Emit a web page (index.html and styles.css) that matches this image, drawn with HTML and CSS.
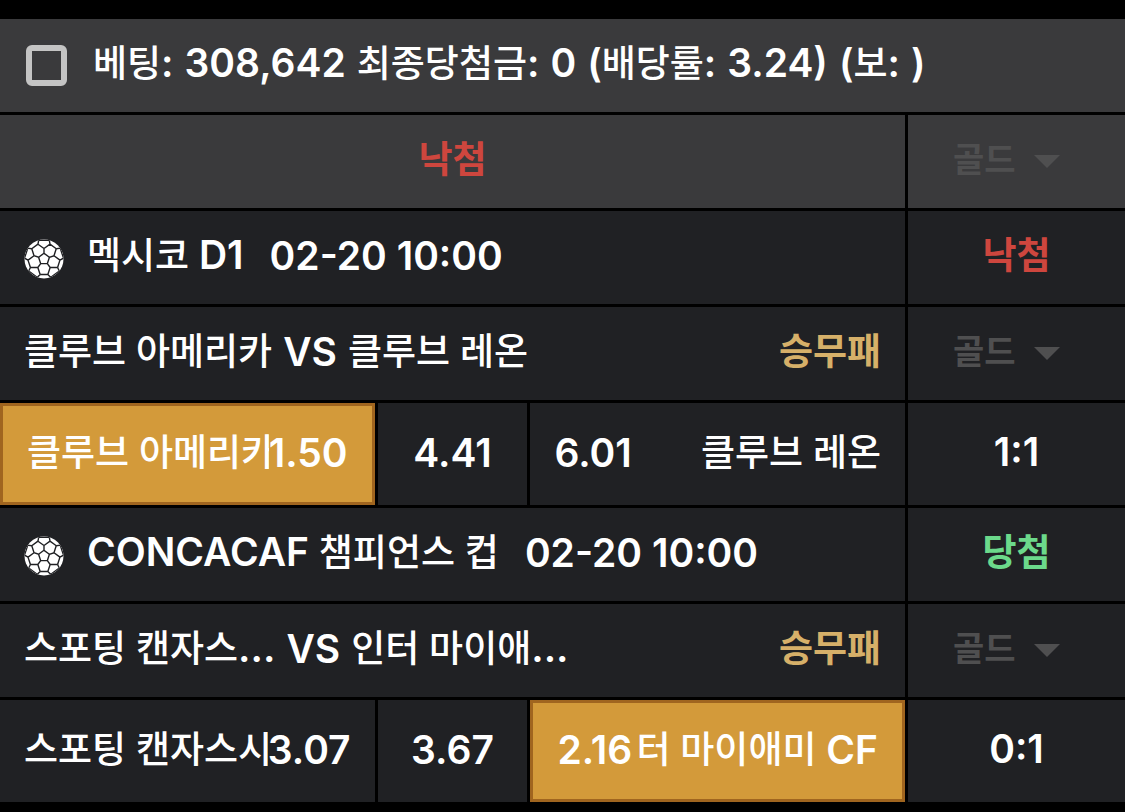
FILE: index.html
```html
<!DOCTYPE html>
<html lang="ko">
<head>
    <meta charset="UTF-8">
    <meta name="viewport" content="width=device-width, initial-scale=1.0">
    <title>베팅 내역</title>
    <link rel="stylesheet" href="styles.css">
</head>
<body>

    <!-- Ball icon, reused by every league row -->
    <svg class="sprite" aria-hidden="true">
        <symbol id="ball" viewBox="0 0 40 40">
            <clipPath id="round"><circle cx="20" cy="20" r="19.5"/></clipPath>
            <circle cx="20" cy="20" r="19.5" fill="#fff"/>
            <g clip-path="url(#round)" fill="none" stroke="#202124" stroke-width="1.4">
                <path id="seam" d="M25.4 18.2L20 14.3V9.5L26 5.2L32.3 9.7M20 9.5L14 5.2M26 5.2L25.2 .7M14 5.2L14.8 .7M14.8 1.2H25.2"/>
                <use href="#seam" transform="rotate(72 20 20)"/>
                <use href="#seam" transform="rotate(144 20 20)"/>
                <use href="#seam" transform="rotate(216 20 20)"/>
                <use href="#seam" transform="rotate(288 20 20)"/>
            </g>
        </symbol>
    </svg>

    <main class="slip">
        <!-- Summary -->
        <div class="cell head full">
            <input type="checkbox" id="pick" class="check">
            <label for="pick" class="words">
                <span>베팅<span class="en">:</span></span>
                <span class="en">308,642</span>
                <span>최종당첨금<span class="en">:</span></span>
                <span class="en">0</span>
                <span><span class="en">(</span>배당률<span class="en">:</span></span>
                <span class="en">3.24)</span>
                <span><span class="en">(</span>보<span class="en">:</span></span>
                <span class="en">)</span>
            </label>
        </div>
        <div class="cell head center lose">낙첨</div>
        <div class="cell head center">
            <select class="gold" aria-label="골드" disabled><option>골드</option></select>
            <span class="arrow"></span>
        </div>

        <!-- Match 1 -->
        <div class="cell league">
            <svg class="ball" aria-hidden="true"><use href="#ball"/></svg>
            <span>멕시코<span class="en"> D1</span></span>
            <time class="en">02-20 10:00</time>
        </div>
        <div class="cell center lose">낙첨</div>
        <div class="cell words">
            <span>클루브 아메리카</span>
            <span class="en">VS</span>
            <span>클루브 레온</span>
            <span class="market">승무패</span>
        </div>
        <div class="cell center">
            <select class="gold" aria-label="골드" disabled><option>골드</option></select>
            <span class="arrow"></span>
        </div>
        <div class="odds">
            <button class="odd home selected"><span class="team">클루브 아메리카</span><span class="en">1.50</span></button>
            <button class="odd draw"><span class="en">4.41</span></button>
            <button class="odd away"><span class="en">6.01</span><span class="team">클루브 레온</span></button>
        </div>
        <div class="cell center score en">1:1</div>

        <!-- Match 2 -->
        <div class="cell league">
            <svg class="ball" aria-hidden="true"><use href="#ball"/></svg>
            <span><span class="en">CONCACAF </span>챔피언스 컵</span>
            <time class="en">02-20 10:00</time>
        </div>
        <div class="cell center win">당첨</div>
        <div class="cell words">
            <span>스포팅 캔자스<span class="en">...</span></span>
            <span class="en">VS</span>
            <span>인터 마이애<span class="en">...</span></span>
            <span class="market">승무패</span>
        </div>
        <div class="cell center">
            <select class="gold" aria-label="골드" disabled><option>골드</option></select>
            <span class="arrow"></span>
        </div>
        <div class="odds">
            <button class="odd home"><span class="team">스포팅 캔자스시티</span><span class="en">3.07</span></button>
            <button class="odd draw"><span class="en">3.67</span></button>
            <button class="odd away selected"><span class="en">2.16</span><span class="team">인터 마이애미<span class="en"> CF</span></span></button>
        </div>
        <div class="cell center score en">0:1</div>
    </main>

</body>
</html>
```
FILE: styles.css
```css
* {
    margin: 0;
    padding: 0;
    box-sizing: border-box;
}

body {
    background: #000;
    color: #fff;
    font-family: Inter, "Noto Sans CJK KR", sans-serif;
    font-size: 37px;
    font-weight: 500;
    line-height: 48px;
    white-space: nowrap;
}

.sprite {
    position: absolute;
    width: 0;
    height: 0;
}

/* Black gaps draw the grid lines */
.slip {
    display: grid;
    grid-template-columns: 1fr 217px;
    gap: 3px;
    padding: 19px 0 10px;
}

.cell {
    display: flex;
    align-items: center;
    min-width: 0;
    min-height: 93px;
    padding: 0 24px 4px;
    background: #202124;
}

.full {
    grid-column: 1 / -1;
}

.head {
    background: #3a3a3c;
}

.center {
    justify-content: center;
}

.words {
    display: flex;
    gap: 11px;
}

/* Latin text and digits */
.en {
    font-size: 39px;
    font-weight: 600;
    white-space: pre;
}

.check {
    appearance: none;
    width: 41px;
    height: 41px;
    margin: 4px 26px 0 2px;
    border: 6px solid #c4c4c4;
    border-radius: 6px;
}

.lose { color: #ce463e; }
.win { color: #6cd98b; }

.lose,
.win,
.market {
    font-weight: 700;
}

.market {
    margin-left: auto;
    color: #d6b069;
}

.ball {
    width: 40px;
    height: 40px;
    margin: 6px 23px 0 0;
}

.league time {
    margin-left: 26px;
}

/* Disabled account picker */
.gold {
    appearance: none;
    border: none;
    background: none;
    color: #4f4f50;
    font: inherit;
    font-size: 34px;
    font-weight: 700;
    opacity: 1;
}

.arrow {
    margin: 4px 20px 0 18px;
    border: 13px solid transparent;
    border-top-color: #4f4f50;
    border-bottom: none;
}

/* Odds row */
.odds {
    display: grid;
    grid-template-columns: 5fr 2fr 5fr;
    gap: 3px;
    min-width: 0;
}

.odd {
    display: flex;
    align-items: center;
    justify-content: space-between;
    min-width: 0;
    min-height: 102px;
    padding: 0 24px 2px;
    border: none;
    background: #202124;
    color: inherit;
    font: inherit;
}

.draw {
    justify-content: center;
}

/* Long names are clipped on the side that meets the odds */
.team {
    display: flex;
    flex: 1;
    min-width: 0;
    overflow: hidden;
}

.away .team {
    justify-content: flex-end;
    margin-left: 2px;
}

.selected {
    border: 3px solid #a0651f;
    background: #d39a3a;
}
```
